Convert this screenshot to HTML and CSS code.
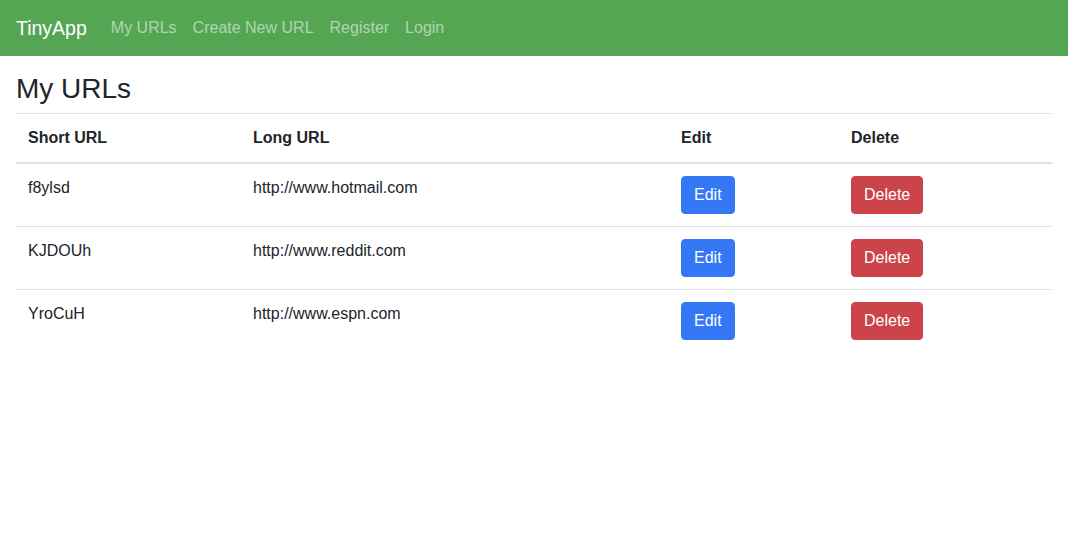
FILE: index.html
```html
<!DOCTYPE html>
<html lang="en">
<head>
<meta charset="utf-8">
<title>TinyApp</title>
<link rel="stylesheet" href="styles.css">
</head>
<body>
<nav class="navbar">
  <a class="brand" href="#">TinyApp</a>
  <ul class="nav">
    <li><a class="nav-link" href="#">My URLs</a></li>
    <li><a class="nav-link" href="#">Create New URL</a></li>
    <li><a class="nav-link" href="#">Register</a></li>
    <li><a class="nav-link" href="#">Login</a></li>
  </ul>
</nav>
<main class="container">
  <h3 class="title">My URLs</h3>
  <table class="table">
    <colgroup>
      <col class="c-short"><col class="c-long"><col class="c-edit"><col class="c-del">
    </colgroup>
    <thead>
      <tr><th>Short URL</th><th>Long URL</th><th>Edit</th><th>Delete</th></tr>
    </thead>
    <tbody>
      <tr>
        <td>f8ylsd</td><td>http://www.hotmail.com</td>
        <td><button class="btn btn-primary">Edit</button></td>
        <td><button class="btn btn-danger">Delete</button></td>
      </tr>
      <tr>
        <td>KJDOUh</td><td>http://www.reddit.com</td>
        <td><button class="btn btn-primary">Edit</button></td>
        <td><button class="btn btn-danger">Delete</button></td>
      </tr>
      <tr>
        <td>YroCuH</td><td>http://www.espn.com</td>
        <td><button class="btn btn-primary">Edit</button></td>
        <td><button class="btn btn-danger">Delete</button></td>
      </tr>
    </tbody>
  </table>
</main>
</body>
</html>
```
FILE: styles.css
```css
* { box-sizing: border-box; }
body {
  margin: 0;
  font-family: "Liberation Sans", Arial, sans-serif;
  font-size: 16px;
  line-height: 1.5;
  color: #212529;
  background: #fff;
}
.navbar {
  display: flex;
  align-items: center;
  height: 56px;
  padding: 8px 16px;
  background: #54a653;
}
.brand {
  font-size: 19.5px;
  line-height: 30px;
  padding: 5px 0;
  margin-right: 16px;
  color: #fff;
  text-decoration: none;
}
.nav {
  display: flex;
  list-style: none;
  margin: 0;
  padding: 0;
}
.nav-link {
  display: block;
  padding: 8px;
  color: rgba(255, 255, 255, 0.55);
  text-decoration: none;
}
.container {
  padding: 16px 16px 0;
}
.title {
  margin: 0 0 7px;
  font-size: 28px;
  font-weight: 500;
  line-height: 1.2;
}
.table {
  width: 100%;
  border-collapse: collapse;
  table-layout: fixed;
}
.c-short { width: 225px; }
.c-long { width: 428px; }
.c-edit { width: 170px; }
.c-del { width: 213px; }
.table th, .table td {
  padding: 12px;
  text-align: left;
  vertical-align: top;
  border-top: 1px solid #dee2e6;
}
.table th {
  font-weight: 700;
  vertical-align: bottom;
  border-bottom: 2px solid #dee2e6;
}
.table thead + tbody tr:first-child td { border-top: 0; }
.btn {
  display: inline-block;
  font-family: inherit;
  font-size: 16px;
  line-height: 24px;
  padding: 6px 12px;
  border: 1px solid transparent;
  border-radius: 4px;
  color: #fff;
  cursor: pointer;
}
.btn-primary { background: #3478f6; border-color: #3478f6; }
.btn-danger { background: #cb444a; border-color: #cb444a; }
```
